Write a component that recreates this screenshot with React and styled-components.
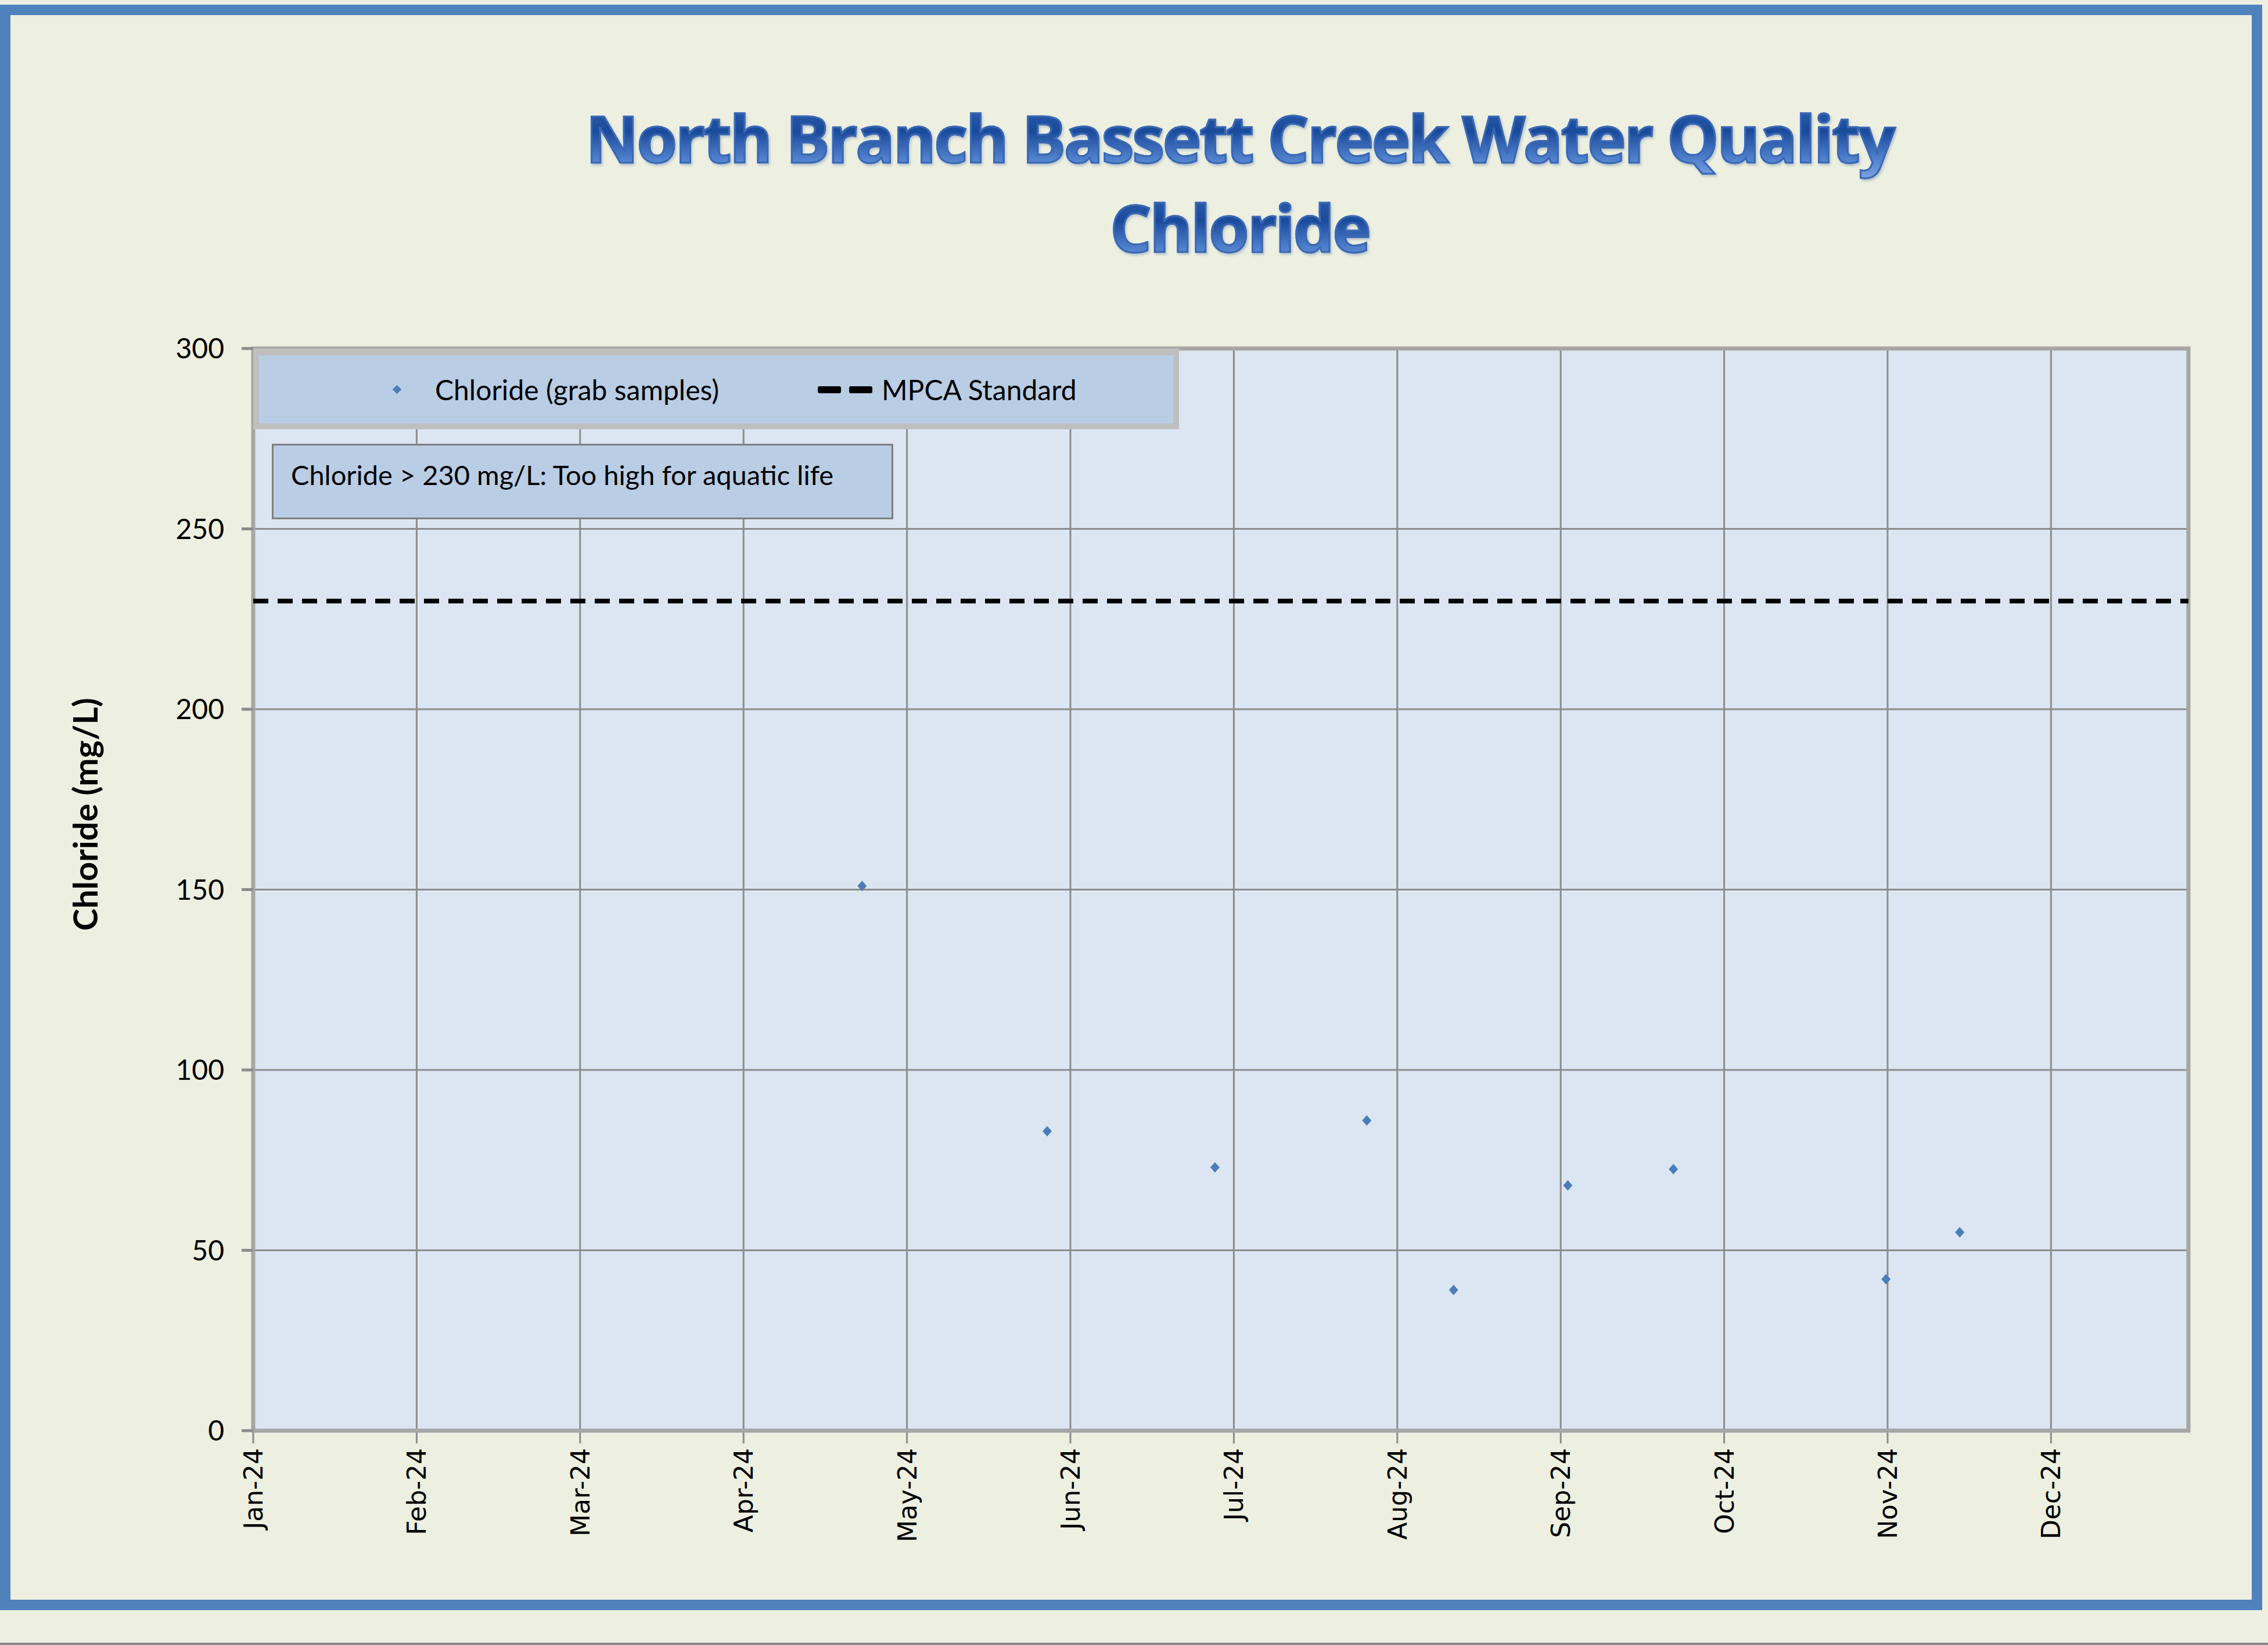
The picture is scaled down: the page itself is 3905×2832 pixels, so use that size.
import React from "react";
import styled, { createGlobalStyle } from "styled-components";

const Global = createGlobalStyle`
  html, body { margin: 0; padding: 0; background: #edf0e1; }
  body { width: 3905px; height: 2832px; overflow: hidden; border-bottom: 4px solid #8a8a8a; box-sizing: border-box; }
`;

const Frame = styled.div`
  margin: 8px 10px 0 0;
  border: 18px solid #4f81bd;
  height: 2728px;
  display: flex;
  flex-direction: column;
  font-family: Lato, "Open Sans", sans-serif;
`;

const Title = styled.div`
  padding: 134px 0 0 374px;
  height: 308px;
  text-align: center;
  font-family: "Open Sans", "DejaVu Sans", sans-serif;
  font-weight: 700;
  font-size: 112px;
  line-height: 154px;
  letter-spacing: -3px;
  background: linear-gradient(180deg, #2c5fae 0%, #1a4a9a 30%, #4f80cc 60%, #9cbdf0 100%);
  background-size: 100% 154px;
  -webkit-background-clip: text;
  background-clip: text;
  color: transparent;
  -webkit-text-stroke: 3px #3a68b4;
  filter: drop-shadow(2px 3px 2px rgba(80,110,160,0.35));
`;

const ChartArea = styled.div`
  position: relative;
  flex: 1;
`;

const Legend = styled.div`
  position: absolute;
  left: 418px;
  top: 132px;
  width: 1574px;
  height: 117px;
  background: #b9cde5;
  border: 10px solid #bfbfbf;
  border-top-width: 12px;
  display: flex;
  align-items: center;
  font-size: 48px;
  color: #000;
`;

const LegendItem = styled.div`
  display: flex;
  align-items: center;
  margin-left: ${p => p.$ml}px;
  gap: ${p => p.$gap}px;
`;

const Diamond = styled.span`
  width: 11px;
  height: 11px;
  background: #4a7ebb;
  transform: rotate(45deg);
`;

const Dashes = styled.span`
  display: flex;
  gap: 14px;
  span { width: 40px; height: 12px; background: #000; border-radius: 3px; }
`;

const Note = styled.div`
  position: absolute;
  left: 450px;
  top: 296px;
  width: 1070px;
  height: 130px;
  background: #b9cde5;
  border: 3px solid #7f7f7f;
  padding: 22px 30px;
  box-sizing: border-box;
  font-size: 47px;
  color: #000;
`;

const L = 436, R = 3768, T = 600, B = 2463;
const yv = v => B - (v * (B - T)) / 300;
const xd = d => L + (d - 175) * 2.49;
const months = ["Jan-24","Feb-24","Mar-24","Apr-24","May-24","Jun-24","Jul-24","Aug-24","Sep-24","Oct-24","Nov-24","Dec-24"];
const monthX = i => L + i * 281.4;
const pts = [[596,151],[724,83],[840,73],[945,86],[1005,39],[1084,68],[1157,72.5],[1304,42],[1355,55]];

export default function App() {
  return (
    <>
      <Global />
      <Frame>
        <Title>North Branch Bassett Creek Water Quality<br />Chloride</Title>
        <ChartArea>
          <svg width="3859" height="2286" viewBox="18 468 3859 2286" style={{ display: "block" }}>
            <rect x={L} y={T} width={R - L} height={B - T} fill="#dce6f2" />
            {[0,1,2,3,4,5].map(i => (
              <line key={"h"+i} x1={L} x2={R} y1={yv(i*50)} y2={yv(i*50)} stroke="#8c8c8c" strokeWidth="3" />
            ))}
            {months.map((m, i) => (
              <line key={"v"+i} x1={monthX(i)} x2={monthX(i)} y1={T} y2={B + 22} stroke="#8c8c8c" strokeWidth="3" />
            ))}
            <rect x={L} y={T} width={R - L} height={B - T} fill="none" stroke="#a6a6a6" strokeWidth="7" />
            {[0,1,2,3,4,5,6].map(i => (
              <g key={"y"+i}>
                <line x1={L - 20} x2={L} y1={yv(i*50)} y2={yv(i*50)} stroke="#8c8c8c" strokeWidth="5" />
                <text x="386" y={yv(i*50) + 17} textAnchor="end" fontFamily="Lato, sans-serif" fontSize="48" fill="#000">{i*50}</text>
              </g>
            ))}
            {months.map((m, i) => (
              <text key={"t"+i} transform={`translate(${monthX(i) + 16} ${B + 30}) rotate(-90)`} textAnchor="end" fontFamily="'DejaVu Sans', sans-serif" fontSize="44" fill="#000">{m}</text>
            ))}
            <line x1={L} x2={R} y1={yv(230)} y2={yv(230)} stroke="#000" strokeWidth="8" strokeDasharray="26 16" />
            {pts.map(([d, v], i) => {
              const x = xd(d), y = yv(v);
              return <polygon key={"p"+i} points={`${x},${y-9} ${x+8},${y} ${x},${y+9} ${x-8},${y}`} fill="#4a7ebb" />;
            })}
            <text transform="translate(168 1402) rotate(-90)" textAnchor="middle" fontFamily="Lato, sans-serif" fontWeight="700" fontSize="58" fill="#000">Chloride (mg/L)</text>
          </svg>
          <Legend>
            <LegendItem $ml={232} $gap={60}><Diamond />Chloride (grab samples)</LegendItem>
            <LegendItem $ml={170} $gap={16}><Dashes><span /><span /></Dashes>MPCA Standard</LegendItem>
          </Legend>
          <Note>Chloride &gt; 230 mg/L: Too high for aquatic life</Note>
        </ChartArea>
      </Frame>
    </>
  );
}
